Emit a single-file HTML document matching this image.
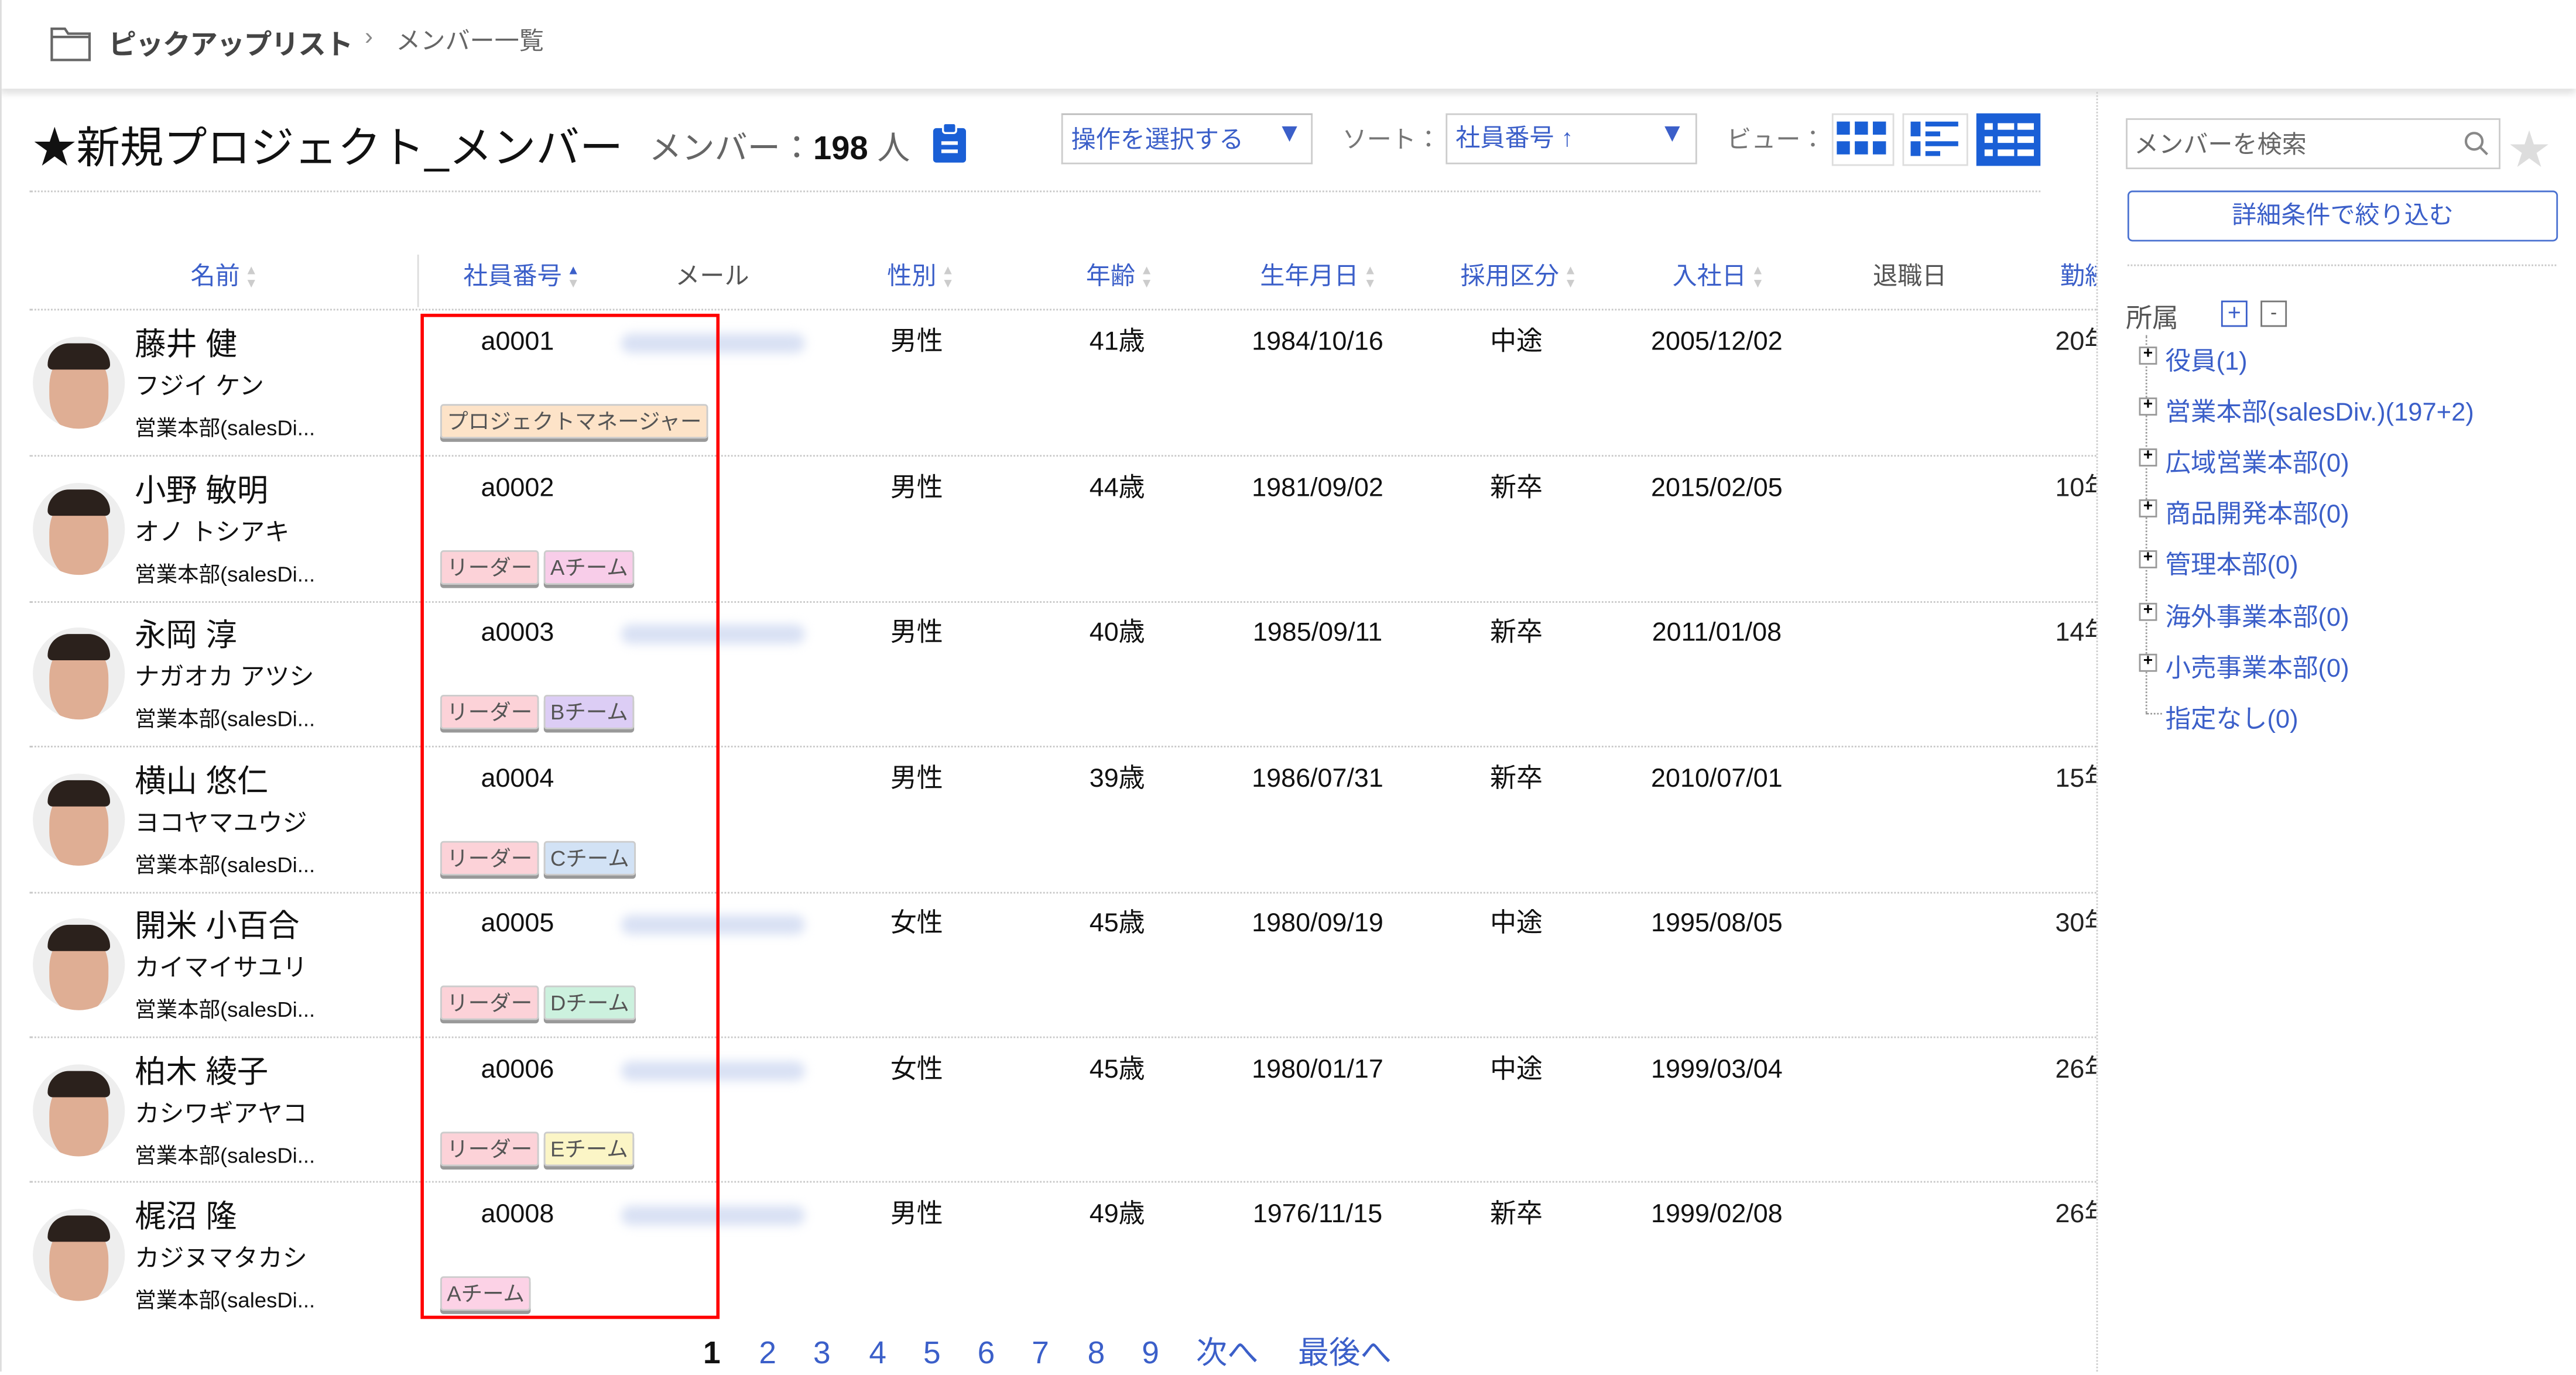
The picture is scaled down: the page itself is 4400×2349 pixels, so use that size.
<!DOCTYPE html>
<html><head><meta charset="utf-8"><style>
html,body{margin:0;padding:0;background:#fff;width:4400px;height:2343px;overflow:hidden}
#w{position:absolute;left:0;top:0;width:1568px;height:835px;transform:scale(2.80612);transform-origin:0 0;font-family:"Liberation Sans","Noto Sans CJK JP",sans-serif;color:#222}
.a{position:absolute;white-space:nowrap}
.hd{font-size:15px;color:#3b5fc9;top:159px;line-height:20px}
.hd .s{display:inline-block;width:7px;margin-left:3px;vertical-align:middle;font-size:8px;line-height:8px;color:#ccc}
.dl{position:absolute;height:0;border-top:1px dotted #c8c8c8}
.row{position:absolute;left:18px;width:1258px;height:88px}
.av{position:absolute;left:2px;top:16px;width:56px;height:56px;border-radius:50%;overflow:hidden;background:#eee}
.av:after{content:"";position:absolute;left:10px;top:8px;width:36px;height:50px;border-radius:45%;background:#dfae94}
.av:before{content:"";position:absolute;left:9px;top:4px;width:38px;height:16px;border-radius:18px 18px 4px 4px;background:#2b211c;z-index:1}
.nm{position:absolute;left:64px;top:10px;font-size:19px;color:#111;line-height:24px}
.kn{position:absolute;left:64px;top:37px;font-size:15px;color:#111;line-height:20px}
.dp{position:absolute;left:64px;top:63px;font-size:13px;color:#111;line-height:18px}
.c{position:absolute;top:10px;font-size:16px;color:#111;transform:translateX(-50%);line-height:20px}
.tg{position:absolute;top:57px;height:19px;line-height:19px;font-size:13px;padding:0 3px;border:1px solid #ccc;border-radius:2px;color:#555;box-shadow:0 2px 0 #999}
.em{position:absolute;left:360px;top:14px;width:112px;height:12px;border-radius:6px;background:#d9e1f4;filter:blur(3px)}
.tr{position:absolute;left:1318px;font-size:15.5px;color:#3b5fc9;line-height:20px}
.bx{position:absolute;left:1302px;top:0;width:9px;height:9px;border:1px solid #999;background:#fff;font-size:10px;line-height:8px;text-align:center;color:#000;font-weight:bold}
.pg{position:absolute;top:813px;font-size:19px;color:#3b5fc9;line-height:24px}
</style></head><body><div id="w">
<div class="a" style="left:0;top:0;width:1568px;height:54px;background:#fff;box-shadow:0 3px 4px rgba(0,0,0,.12)"></div>
<div class="a" style="left:0;top:0;width:1px;height:835px;background:#ddd"></div>
<svg class="a" style="left:30px;top:14px" width="26" height="24" viewBox="0 0 26 24"><path d="M1.5 3.5h8l2 3h13v16h-23z M1.5 8.5h23" fill="none" stroke="#666" stroke-width="1.5"/></svg>
<div class="a" style="left:66px;top:13px;font-size:17px;font-weight:bold;color:#444;letter-spacing:-0.5px">ピックアップリスト</div>
<div class="a" style="left:222px;top:14px;font-size:15px;color:#888">›</div>
<div class="a" style="left:241px;top:14px;font-size:15px;color:#666">メンバー一覧</div>
<div class="a" style="left:20px;top:68px;font-size:26.5px;color:#111">★新規プロジェクト_メンバー</div>
<div class="a" style="left:395px;top:74px;font-size:20px;color:#666">メンバー：<b style="color:#111">198</b> 人</div>
<svg class="a" style="left:567px;top:74px" width="22" height="26" viewBox="0 0 22 26"><rect x="1" y="4" width="20" height="21" rx="2" fill="#1a5fd6"/><rect x="7" y="1" width="8" height="6" rx="1.5" fill="#1a5fd6" stroke="#fff" stroke-width="1.2"/><rect x="6" y="12" width="10" height="2.2" fill="#fff"/><rect x="6" y="17" width="10" height="2.2" fill="#fff"/></svg>
<div class="a" style="left:646px;top:69px;width:151px;height:29px;border:1px solid #ccc;border-top-color:#bbb"></div>
<div class="a" style="left:652px;top:74px;font-size:15px;color:#3b5fc9">操作を選択する</div>
<div class="a" style="left:777px;top:73px;font-size:16px;color:#3b5fc9">▼</div>
<div class="a" style="left:817px;top:74px;font-size:15px;color:#777">ソート：</div>
<div class="a" style="left:880px;top:69px;width:151px;height:29px;border:1px solid #ccc"></div>
<div class="a" style="left:886px;top:73px;font-size:15px;color:#3b5fc9">社員番号 ↑</div>
<div class="a" style="left:1010px;top:73px;font-size:16px;color:#3b5fc9">▼</div>
<div class="a" style="left:1051px;top:74px;font-size:15px;color:#777">ビュー：</div>
<div class="a" style="left:1115px;top:69px;width:36px;height:30px;border:1px solid #ddd"></div>
<svg class="a" style="left:1118px;top:73px" width="31" height="22"><g fill="#1a5fd6"><rect x="0" y="1" width="8" height="8"/><rect x="11" y="1" width="8" height="8"/><rect x="22" y="1" width="8" height="8"/><rect x="0" y="13" width="8" height="8"/><rect x="11" y="13" width="8" height="8"/><rect x="22" y="13" width="8" height="8"/></g></svg>
<div class="a" style="left:1158px;top:69px;width:38px;height:30px;border:1px solid #ddd"></div>
<svg class="a" style="left:1163px;top:74px" width="29" height="21"><g fill="#1a5fd6"><rect x="0" y="0" width="6" height="9"/><rect x="9" y="0" width="20" height="3"/><rect x="9" y="6" width="9" height="3"/><rect x="0" y="12" width="6" height="9"/><rect x="9" y="12" width="20" height="3"/><rect x="9" y="18" width="9" height="3"/></g></svg>
<div class="a" style="left:1203px;top:69px;width:39px;height:32px;background:#1a5fd6"></div>
<svg class="a" style="left:1207px;top:73px" width="32" height="24"><g fill="#fff"><rect x="1" y="2" width="5" height="4"/><rect x="9" y="2" width="22" height="4"/><rect x="1" y="10" width="5" height="4"/><rect x="9" y="10" width="22" height="4"/><rect x="1" y="18" width="5" height="4"/><rect x="9" y="18" width="22" height="4"/></g><g fill="#1a5fd6"><rect x="19" y="2" width="2" height="20"/></g></svg>
<div class="dl" style="left:18px;top:116px;width:1224px"></div>
<div class="a" style="left:1276px;top:56px;width:0;height:779px;border-left:1px dotted #ccc"></div>
<div class="a" style="left:1294px;top:72px;width:226px;height:29px;border:1px solid #ccc"></div>
<div class="a" style="left:1299px;top:77px;font-size:15px;color:#666">メンバーを検索</div>
<svg class="a" style="left:1499px;top:79px" width="16" height="16"><circle cx="7" cy="7" r="5" fill="none" stroke="#888" stroke-width="1.5"/><path d="M11 11l4 4" stroke="#888" stroke-width="1.5"/></svg>
<div class="a" style="left:1527px;top:72px;font-size:25px;color:#ddd">★</div>
<div class="a" style="left:1295px;top:116px;width:260px;height:29px;border:1.5px solid #4b72d1;border-radius:3px;text-align:center;line-height:29px;font-size:15px;color:#3b5fc9">詳細条件で絞り込む</div>
<div class="dl" style="left:1295px;top:161px;width:261px"></div>
<div class="a" style="left:1294px;top:180px;font-size:16px;color:#555">所属</div>
<div class="a" style="left:1352px;top:183px;width:14px;height:14px;border:1px solid #3b5fc9;color:#3b5fc9;font-size:14px;line-height:13px;text-align:center">+</div>
<div class="a" style="left:1376px;top:183px;width:14px;height:14px;border:1px solid #777;color:#555;font-size:12px;line-height:12px;text-align:center">-</div>
<div class="a" style="left:1306px;top:204px;height:230px;border-left:1px dotted #999"></div>
<div class="a" style="left:1306px;top:434px;width:10px;border-top:1px dotted #999"></div>
<div class="bx" style="top:211px">+</div><div class="tr" style="top:211px">役員(1)</div>
<div class="bx" style="top:242px">+</div><div class="tr" style="top:242px">営業本部(salesDiv.)(197+2)</div>
<div class="bx" style="top:273px">+</div><div class="tr" style="top:273px">広域営業本部(0)</div>
<div class="bx" style="top:304px">+</div><div class="tr" style="top:304px">商品開発本部(0)</div>
<div class="bx" style="top:335px">+</div><div class="tr" style="top:335px">管理本部(0)</div>
<div class="bx" style="top:367px">+</div><div class="tr" style="top:367px">海外事業本部(0)</div>
<div class="bx" style="top:398px">+</div><div class="tr" style="top:398px">小売事業本部(0)</div>
<div class="tr" style="top:429px">指定なし(0)</div>
<div class="a" style="left:254px;top:155px;width:1px;height:32px;background:#ddd"></div>
<div class="a hd" style="left:116px">名前<span class="s">▲<br>▼</span></div>
<div class="a hd" style="left:282px">社員番号<span class="s"><span style="color:#3b5fc9">▲</span><br>▼</span></div>
<div class="a hd" style="left:411px;color:#555">メール</div>
<div class="a hd" style="left:540px">性別<span class="s">▲<br>▼</span></div>
<div class="a hd" style="left:661px">年齢<span class="s">▲<br>▼</span></div>
<div class="a hd" style="left:767px">生年月日<span class="s">▲<br>▼</span></div>
<div class="a hd" style="left:889px">採用区分<span class="s">▲<br>▼</span></div>
<div class="a hd" style="left:1018px">入社日<span class="s">▲<br>▼</span></div>
<div class="a hd" style="left:1140px;color:#555">退職日</div>
<div class="a hd" style="left:1254px;width:22px;overflow:hidden">勤続</div>
<div class="dl" style="left:18px;top:188px;width:1258px"></div>
<div class="dl" style="left:18px;top:277px;width:1258px"></div>
<div class="dl" style="left:18px;top:366px;width:1258px"></div>
<div class="dl" style="left:18px;top:454px;width:1258px"></div>
<div class="dl" style="left:18px;top:543px;width:1258px"></div>
<div class="dl" style="left:18px;top:631px;width:1258px"></div>
<div class="dl" style="left:18px;top:719px;width:1258px"></div>

<div class="row" style="top:189px"><div class="av"></div><div class="nm">藤井 健</div><div class="kn">フジイ ケン</div><div class="dp">営業本部(salesDi...</div><div class="c" style="left:297px">a0001</div><div class="em"></div><div class="c" style="left:540px">男性</div><div class="c" style="left:662px">41歳</div><div class="c" style="left:784px">1984/10/16</div><div class="c" style="left:905px">中途</div><div class="c" style="left:1027px">2005/12/02</div><div class="a" style="left:1233px;top:10px;line-height:20px;font-size:16px;width:25px;overflow:hidden">20年</div><div class="tg" style="left:250px;background:#fde3c8">プロジェクトマネージャー</div></div>
<div class="row" style="top:278px"><div class="av"></div><div class="nm">小野 敏明</div><div class="kn">オノ トシアキ</div><div class="dp">営業本部(salesDi...</div><div class="c" style="left:297px">a0002</div><div class="c" style="left:540px">男性</div><div class="c" style="left:662px">44歳</div><div class="c" style="left:784px">1981/09/02</div><div class="c" style="left:905px">新卒</div><div class="c" style="left:1027px">2015/02/05</div><div class="a" style="left:1233px;top:10px;line-height:20px;font-size:16px;width:25px;overflow:hidden">10年</div><div class="tg" style="left:250px;background:#fcd2d8">リーダー</div><div class="tg" style="left:313px;background:#f8cde9">Aチーム</div></div>
<div class="row" style="top:366px"><div class="av"></div><div class="nm">永岡 淳</div><div class="kn">ナガオカ アツシ</div><div class="dp">営業本部(salesDi...</div><div class="c" style="left:297px">a0003</div><div class="em"></div><div class="c" style="left:540px">男性</div><div class="c" style="left:662px">40歳</div><div class="c" style="left:784px">1985/09/11</div><div class="c" style="left:905px">新卒</div><div class="c" style="left:1027px">2011/01/08</div><div class="a" style="left:1233px;top:10px;line-height:20px;font-size:16px;width:25px;overflow:hidden">14年</div><div class="tg" style="left:250px;background:#fcd2d8">リーダー</div><div class="tg" style="left:313px;background:#dccdf5">Bチーム</div></div>
<div class="row" style="top:455px"><div class="av"></div><div class="nm">横山 悠仁</div><div class="kn">ヨコヤマユウジ</div><div class="dp">営業本部(salesDi...</div><div class="c" style="left:297px">a0004</div><div class="c" style="left:540px">男性</div><div class="c" style="left:662px">39歳</div><div class="c" style="left:784px">1986/07/31</div><div class="c" style="left:905px">新卒</div><div class="c" style="left:1027px">2010/07/01</div><div class="a" style="left:1233px;top:10px;line-height:20px;font-size:16px;width:25px;overflow:hidden">15年</div><div class="tg" style="left:250px;background:#fcd2d8">リーダー</div><div class="tg" style="left:313px;background:#d2e2f5">Cチーム</div></div>
<div class="row" style="top:543px"><div class="av"></div><div class="nm">開米 小百合</div><div class="kn">カイマイサユリ</div><div class="dp">営業本部(salesDi...</div><div class="c" style="left:297px">a0005</div><div class="em"></div><div class="c" style="left:540px">女性</div><div class="c" style="left:662px">45歳</div><div class="c" style="left:784px">1980/09/19</div><div class="c" style="left:905px">中途</div><div class="c" style="left:1027px">1995/08/05</div><div class="a" style="left:1233px;top:10px;line-height:20px;font-size:16px;width:25px;overflow:hidden">30年</div><div class="tg" style="left:250px;background:#fcd2d8">リーダー</div><div class="tg" style="left:313px;background:#ccf1de">Dチーム</div></div>
<div class="row" style="top:632px"><div class="av"></div><div class="nm">柏木 綾子</div><div class="kn">カシワギアヤコ</div><div class="dp">営業本部(salesDi...</div><div class="c" style="left:297px">a0006</div><div class="em"></div><div class="c" style="left:540px">女性</div><div class="c" style="left:662px">45歳</div><div class="c" style="left:784px">1980/01/17</div><div class="c" style="left:905px">中途</div><div class="c" style="left:1027px">1999/03/04</div><div class="a" style="left:1233px;top:10px;line-height:20px;font-size:16px;width:25px;overflow:hidden">26年</div><div class="tg" style="left:250px;background:#fcd2d8">リーダー</div><div class="tg" style="left:313px;background:#fbf5c6">Eチーム</div></div>
<div class="row" style="top:720px"><div class="av"></div><div class="nm">梶沼 隆</div><div class="kn">カジヌマタカシ</div><div class="dp">営業本部(salesDi...</div><div class="c" style="left:297px">a0008</div><div class="em"></div><div class="c" style="left:540px">男性</div><div class="c" style="left:662px">49歳</div><div class="c" style="left:784px">1976/11/15</div><div class="c" style="left:905px">新卒</div><div class="c" style="left:1027px">1999/02/08</div><div class="a" style="left:1233px;top:10px;line-height:20px;font-size:16px;width:25px;overflow:hidden">26年</div><div class="tg" style="left:250px;background:#fcd2e6">Aチーム</div></div>

<div class="a" style="left:256px;top:191px;width:178px;height:608px;border:2px solid #f00"></div>
<div class="pg" style="left:428px;color:#111;font-weight:bold">1</div>
<div class="pg" style="left:462px">2</div><div class="pg" style="left:495px">3</div><div class="pg" style="left:529px">4</div><div class="pg" style="left:562px">5</div><div class="pg" style="left:595px">6</div><div class="pg" style="left:628px">7</div><div class="pg" style="left:662px">8</div><div class="pg" style="left:695px">9</div>
<div class="pg" style="left:728px">次へ</div><div class="pg" style="left:790px">最後へ</div>
</div></body></html>
